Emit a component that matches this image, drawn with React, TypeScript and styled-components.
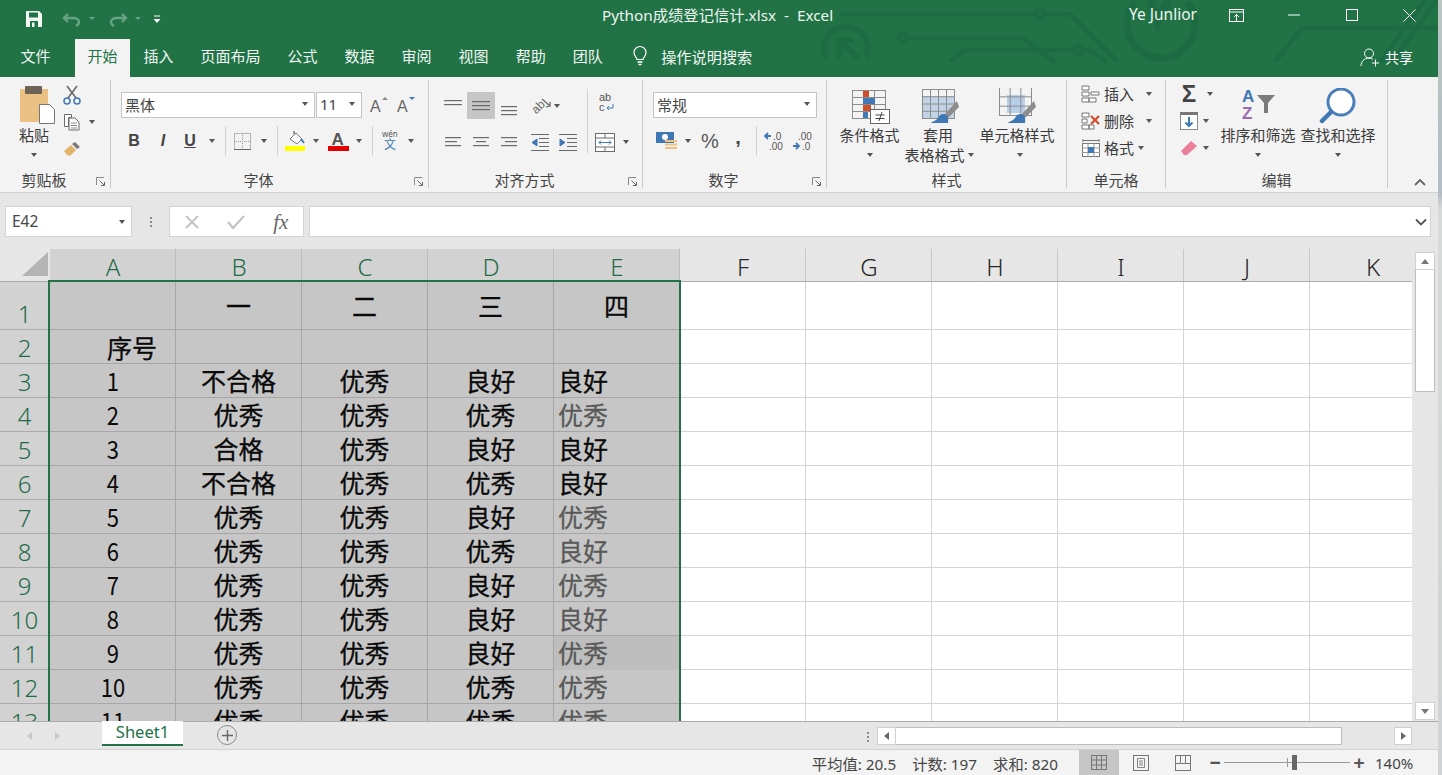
import React, {FC} from 'react';
import styled, {createGlobalStyle} from 'styled-components';

const GREEN = '#217346';
const CJK = '"Noto Sans", "Noto Sans CJK SC", sans-serif';

const Global = createGlobalStyle`
html, body {
  margin: 0;
  width: 1442px;
  height: 775px;
  overflow: hidden;
  background: #e6e6e6;
  font-family: ${CJK};
  color: #333;
}
`;

const Page = styled.div`
display: flex;
width: 1442px;
height: 775px;
overflow: hidden;
`;
const Edge = styled.div`
width: 4px;
background: linear-gradient(#b9c6c2, #b4bcc4 25%, #d6dad8 27%, #cfd3d3);
`;
const Win = styled.div`
width: 1438px;
display: flex;
flex-direction: column;
`;

/* ---- header ---- */
const Header = styled.header`
position: relative;
height: 77px;
background: ${GREEN};
color: #fff;
`;
const Circuit = styled.svg`
position: absolute;
left: 0;
top: 0;
pointer-events: none;
`;
const TitleRow = styled.div`
position: relative;
display: flex;
align-items: center;
height: 37px;
`;
const Quick = styled.div`
width: 602px;
display: flex;
align-items: center;
padding-left: 25px;
box-sizing: border-box;
`;
const QuickSlot = styled.div<{$w: number; $ml?: number}>`
width: ${p => p.$w}px;
margin-left: ${p => p.$ml || 0}px;
display: flex;
align-items: center;
gap: 7px;
`;
const DocTitle = styled.div`
width: 527px;
font-size: 15.3px;
white-space: pre;
color: #eef5f0;
margin-top: -9px;
`;
const UserName = styled.div`
width: 79px;
font-size: 15.5px;
margin-top: -9px;
color: #eef5f0;
white-space: nowrap;
`;
const WinBtn = styled.div`
width: 57.5px;
display: flex;
justify-content: center;
margin-top: -7px;
`;
const TabRow = styled.nav`
position: relative;
display: flex;
align-items: center;
height: 40px;
padding-left: 7px;
`;
const Tab = styled.div<{$active?: boolean; $gap?: number}>`
display: flex;
align-items: center;
align-self: flex-end;
height: 38px;
box-sizing: border-box;
padding: 0 ${p => (p.$active ? 12.5 : 13.5)}px 5px;
margin-right: ${p => p.$gap || 0}px;
font-size: 15px;
color: ${p => (p.$active ? '#217346' : '#f2f7f4')};
background: ${p => (p.$active ? '#f3f3f3' : 'transparent')};
`;
const TellMe = styled.div`
display: flex;
align-items: center;
gap: 11px;
margin-left: 14px;
font-size: 15.2px;
color: #f2f7f4;
padding-bottom: 3px;
`;
const Share = styled.div`
margin-left: auto;
padding-right: 25px;
display: flex;
align-items: center;
gap: 4px;
font-size: 14px;
`;

/* ---- ribbon ---- */
const Ribbon = styled.section`
display: flex;
height: 116px;
background: #f3f3f3;
border-bottom: 1px solid #d2d2d2;
box-sizing: border-box;
font-size: 15px;
color: #3a3a3a;
`;
const Group = styled.div<{$w: number}>`
position: relative;
width: ${p => p.$w}px;
display: flex;
flex-direction: column;
box-sizing: border-box;
&::after {
  content: "";
  position: absolute;
  right: 0;
  top: 3px;
  bottom: 4px;
  width: 1px;
  background: #c8c8c8;
}
`;
const Body = styled.div<{$pt?: number; $pl?: number}>`
height: 92px;
box-sizing: border-box;
padding-top: ${p => p.$pt ?? 15}px;
padding-left: ${p => p.$pl ?? 10}px;
display: flex;
`;
const Foot = styled.div`
height: 20px;
display: flex;
align-items: center;
padding-right: 1px;
`;
const FootLabel = styled.div`
flex: 1;
text-align: center;
font-size: 15px;
color: #444;
`;
const FootLauncher = styled.div`
width: 22px;
box-sizing: border-box;
padding: 5px 4px 0 0;
display: flex;
justify-content: flex-end;
`;
const Stack = styled.div<{$gap?: number}>`
display: flex;
flex-direction: column;
gap: ${p => p.$gap ?? 11}px;
`;
const Row = styled.div<{$h?: number}>`
display: flex;
align-items: center;
height: ${p => p.$h ?? 26}px;
`;
const Slot = styled.div<{$w: number; $on?: boolean}>`
width: ${p => p.$w}px;
height: 100%;
flex: none;
display: flex;
align-items: center;
justify-content: center;
background: ${p => (p.$on ? '#c6c6c6' : 'transparent')};
`;
const Caret = styled.i`
display: block;
width: 0;
height: 0;
border-left: 3.5px solid transparent;
border-right: 3.5px solid transparent;
border-top: 4px solid #555;
`;
const QuickCaret = styled(Caret)`
border-left-width: 3px;
border-right-width: 3px;
border-top: 3px solid #67a384;
`;
const Bar = styled.i`
display: block;
width: 1px;
height: 30px;
background: #d2d2d2;
`;
const Select = styled.div<{$w: number}>`
width: ${p => p.$w}px;
height: 26px;
flex: none;
box-sizing: border-box;
display: flex;
align-items: center;
justify-content: space-between;
padding: 0 6px 2px 3px;
background: #fff;
border: 1px solid #c4c4c4;
font-size: 15px;
color: #444;
`;
const FontLetter = styled.span<{$i?: boolean; $u?: boolean}>`
font-family: "Liberation Sans", sans-serif;
font-weight: 700;
font-size: 16px;
color: #444;
font-style: ${p => (p.$i ? 'italic' : 'normal')};
text-decoration: ${p => (p.$u ? 'underline' : 'none')};
`;
const NumText = styled.span<{$size: number}>`
font-family: "Liberation Sans", sans-serif;
font-size: ${p => p.$size}px;
font-weight: 400;
color: #555;
`;
const Big = styled.div<{$w: number}>`
width: ${p => p.$w}px;
flex: none;
display: flex;
flex-direction: column;
align-items: center;
`;
const BigIcon = styled.div<{$h?: number; $ml?: number}>`
height: ${p => p.$h ?? 37}px;
margin-left: ${p => p.$ml || 0}px;
display: flex;
align-items: flex-start;
justify-content: center;
`;
const BigLine = styled.div<{$ml?: number}>`
height: 20px;
line-height: 20px;
margin-left: ${p => p.$ml || 0}px;
display: flex;
align-items: center;
gap: 3px;
white-space: nowrap;
font-size: 15px;
color: #3a3a3a;
`;
const MiniRow = styled.div<{$caret: number}>`
display: flex;
align-items: center;
height: 27px;
font-size: 15px;
gap: 1px;
& > i {
  margin-left: ${p => p.$caret}px;
}
`;
const Collapse = styled.div`
flex: 1;
display: flex;
align-items: flex-end;
justify-content: flex-end;
padding: 0 12px 6px 0;
`;

/* ---- formula bar ---- */
const FormulaBar = styled.div`
height: 56px;
box-sizing: border-box;
padding: 13px 7px 12px 5px;
display: flex;
background: #e6e6e6;
font-size: 15.5px;
`;
const WhiteBox = styled.div<{$w?: number}>`
${p => (p.$w ? `width: ${p.$w}px; flex: none;` : 'flex: 1;')}
box-sizing: border-box;
background: #fff;
border: 1px solid #d4d4d4;
display: flex;
align-items: center;
`;
const NameValue = styled.span`
flex: 1;
padding: 0 0 2px 6px;
color: #444;
`;
const Grip = styled.div`
width: 37px;
display: flex;
flex-direction: column;
align-items: center;
justify-content: center;
gap: 2px;
& i {
  width: 2px;
  height: 2px;
  background: #8a8a8a;
}
`;
const FxBtn = styled.div`
flex: 1;
display: flex;
align-items: center;
justify-content: center;
`;
const FxText = styled.span`
font-family: "Liberation Serif", serif;
font-style: italic;
font-weight: 400;
font-size: 21px;
color: #666;
line-height: 20px;
`;

/* ---- sheet ---- */
const SheetArea = styled.div`
height: 472px;
display: flex;
background: #e6e6e6;
`;
const Grid = styled.div`
position: relative;
width: 1412px;
height: 472px;
overflow: hidden;
background: #fff;
`;
const GridRow = styled.div`
display: flex;
`;
const Corner = styled.div`
width: 50px;
height: 32px;
flex: none;
box-sizing: content-box;
display: flex;
align-items: flex-end;
justify-content: flex-end;
background: #e6e6e6;
border-bottom: 1px solid #ababab;
& > svg {
  margin: 0 2px 5px 0;
}
`;
const ColHead = styled.div<{$sel: boolean}>`
width: 126px;
height: 32px;
flex: none;
box-sizing: content-box;
display: flex;
align-items: center;
justify-content: center;
font-size: 24px;
font-weight: 300;
line-height: 30px;
padding-top: 0;
background: ${p => (p.$sel ? '#d2d2d2' : '#e6e6e6')};
color: ${p => (p.$sel ? '#1f6b48' : '#262626')};
border-bottom: 1px solid #ababab;
box-shadow: inset -1px 0 0 ${p => (p.$sel ? '#bdbdbd' : '#c8c8c8')};
& > span {
  transform: translateY(2px);
}
`;
const RowHead = styled.div<{$h: number}>`
width: 50px;
height: ${p => p.$h}px;
flex: none;
box-sizing: border-box;
display: flex;
align-items: flex-end;
justify-content: center;
padding-right: 1px;
line-height: 31px;
font-size: 24px;
font-weight: 300;
color: #1f6b48;
background: #d2d2d2;
border-bottom: 1px solid #ababab;
`;
const Cell = styled.div<{$h: number; $sel: boolean; $align: string; $gray?: boolean; $dark?: boolean; $pl: number}>`
width: 126px;
height: ${p => p.$h}px;
flex: none;
box-sizing: border-box;
display: flex;
align-items: center;
justify-content: ${p => p.$align};
padding-left: ${p => p.$pl}px;
font-family: "Noto Sans CJK SC", sans-serif;
font-size: 25px;
font-weight: 400;
-webkit-text-stroke: 0.3px currentColor;
line-height: 1;
color: ${p => (p.$gray ? '#595959' : '#0a0a0a')};
background: ${p => (p.$dark ? '#bebebe' : p.$sel ? '#c6c6c6' : '#fff')};
border-right: 1px solid ${p => (p.$sel ? '#a6a6a6' : '#d4d4d4')};
border-bottom: 1px solid ${p => (p.$dark ? '#bebebe' : p.$sel ? '#a6a6a6' : '#d4d4d4')};
`;
const Digit = styled.span`
display: inline-block;
font-weight: 400;
-webkit-text-stroke: 0;
transform: scaleX(0.88);
`;
const SeqHead = styled.span`
padding-bottom: 1px;
padding-top: 2px;
`;
const Selection = styled.div`
position: absolute;
left: 48px;
top: 31px;
width: 629px;
height: 460px;
border: 2px solid ${GREEN};
`;
const VScroll = styled.div`
width: 26px;
box-sizing: border-box;
padding: 3px 3px 1px 3px;
display: flex;
flex-direction: column;
`;
const ScrollBtn = styled.div<{$w?: number}>`
width: ${p => p.$w ?? 20}px;
height: 18px;
flex: none;
box-sizing: border-box;
background: #fff;
border: 1px solid #d0d0d0;
display: flex;
align-items: center;
justify-content: center;
`;
const VThumb = styled.div`
width: 20px;
height: 122px;
box-sizing: border-box;
background: #fff;
border: 1px solid #bdbdbd;
border-top: none;
margin-bottom: auto;
`;
const Arrow = styled.i<{$dir: 'up' | 'down' | 'left' | 'right'; $color?: string}>`
display: block;
width: 0;
height: 0;
border: 4.5px solid transparent;
${p => (p.$dir === 'up' ? `border-top: none; border-bottom: 5px solid ${p.$color || '#777'};` : '')}
${p => (p.$dir === 'down' ? `border-bottom: none; border-top: 5px solid ${p.$color || '#777'};` : '')}
${p => (p.$dir === 'left' ? `border-left: none; border-right: 5px solid ${p.$color || '#777'};` : '')}
${p => (p.$dir === 'right' ? `border-right: none; border-left: 5px solid ${p.$color || '#777'};` : '')}
`;

/* ---- sheet tabs ---- */
const TabBar = styled.div`
height: 29px;
box-sizing: border-box;
display: flex;
background: #e6e6e6;
border-top: 1px solid #ababab;
border-bottom: 1px solid #d2d2d2;
`;
const NavArrows = styled.div`
width: 102px;
display: flex;
align-items: center;
gap: 23px;
padding-left: 27px;
box-sizing: border-box;
`;
const SheetTab = styled.div`
width: 81px;
height: 25px;
box-sizing: border-box;
margin-top: -1px;
background: #fff;
border-bottom: 2px solid ${GREEN};
color: ${GREEN};
font-size: 16.5px;
text-align: center;
line-height: 22px;
`;
const AddSheet = styled.div`
width: 20px;
height: 20px;
box-sizing: border-box;
margin: 3px 0 0 34px;
border: 1px solid #8a8a8a;
border-radius: 50%;
display: flex;
align-items: center;
justify-content: center;
`;
const HGrip = styled(Grip)`
width: auto;
margin-left: auto;
margin-right: 8px;
padding-top: 2px;
`;
const HScroll = styled.div`
width: 535px;
margin: 5px 26px 0 0;
height: 18px;
display: flex;
`;
const HThumb = styled.div`
width: 446px;
height: 18px;
box-sizing: border-box;
background: #fff;
border: 1px solid #bdbdbd;
border-left: none;
margin-right: auto;
`;

/* ---- status bar ---- */
const StatusBar = styled.footer`
height: 25px;
display: flex;
align-items: center;
background: #f3f3f3;
font-size: 15.3px;
color: #444;
`;
const Stats = styled.div`
margin-left: auto;
display: flex;
gap: 16px;
`;
const ViewBtns = styled.div`
display: flex;
gap: 2px;
margin-left: 21px;
height: 100%;
`;
const ViewBtn = styled.div<{$on?: boolean}>`
width: 40px;
display: flex;
align-items: center;
justify-content: center;
background: ${p => (p.$on ? '#c6c6c6' : 'transparent')};
`;
const Zoomer = styled.div`
display: flex;
align-items: center;
margin-left: 5px;
gap: 2px;
color: #555;
`;
const ZoomSign = styled.span`
width: 14px;
text-align: center;
font-size: 19px;
line-height: 19px;
font-family: "Liberation Sans", sans-serif;
font-weight: 700;
`;
const ZoomTrack = styled.div`
position: relative;
width: 126px;
height: 1px;
background: #9a9a9a;
&::before {
  content: "";
  position: absolute;
  left: 63px;
  top: -4px;
  width: 1px;
  height: 9px;
  background: #9a9a9a;
}
`;
const ZoomThumb = styled.div`
position: absolute;
left: 68px;
top: -7px;
width: 5px;
height: 15px;
background: #666;
`;
const ZoomValue = styled.div`
width: 72px;
padding-left: 9px;
box-sizing: border-box;
font-size: 15px;
`;

/* ---- icons ---- */
const S: FC<{w: number; h: number; children: React.ReactNode}> = ({w, h, children}) => (
    <svg width={w} height={h} viewBox={`0 0 ${w} ${h}`} style={{display: 'block', flex: 'none'}}>{children}</svg>
);

const Lines: FC<{rows: number[][]; w?: number; h?: number}> = ({rows, w = 22, h = 20}) => (
    <S w={w} h={h}>
        {rows.map((r, i) => <rect key={i} x={r[1]} y={r[0]} width={r[2] - r[1]} height={1.2} fill="#6a6a6a" />)}
    </S>
);

const Brush: FC<{x: number; y: number}> = ({x, y}) => (
    <g transform={`translate(${x} ${y})`}>
        <path d="M26 0l2 6-11 11-4-3z" fill="#8d8d8d" />
        <path d="M12 13c4 0 6 3 5 9H0c2-2 5-2 7-5 1-2 3-4 5-4z" fill="#3f78b5" />
    </g>
);

const TableGrid: FC<{w: number; h: number; cols: number; rows: number}> = ({w, h, cols, rows}) => (
    <g stroke="#8c8c8c" strokeWidth="1" fill="none">
        <rect x=".5" y=".5" width={w} height={h} />
        {Array.from({length: cols - 1}).map((_, i) => <path key={i} d={`M${.5 + (i + 1) * w / cols} 0v${h}`} />)}
        {Array.from({length: rows - 1}).map((_, i) => <path key={i} d={`M0 ${.5 + (i + 1) * h / rows}h${w}`} />)}
    </g>
);

const Launcher: FC = () => (
    <S w={10} h={10}>
        <path d="M.5 8V.5H8" fill="none" stroke="#8a8a8a" />
        <path d="M3.5 3.5L8 8M8.5 5v3.5H5" fill="none" stroke="#666" />
    </S>
);

const SmallGroupLabel: FC<{label: string; launcher?: boolean}> = ({label, launcher}) => (
    <Foot>
        <FootLabel>{label}</FootLabel>
        {launcher && <FootLauncher><Launcher /></FootLauncher>}
    </Foot>
);

const columns = ['A', 'B', 'C', 'D', 'E', 'F', 'G', 'H', 'I', 'J', 'K'];

interface RowData {
    no: number;
    h: number;
    a?: string;
    cells: string[];
    grayE?: boolean;
}

const rows: RowData[] = [
    {no: 1, h: 48, cells: ['一', '二', '三', '四']},
    {no: 2, h: 34, a: '序号', cells: ['', '', '', '']},
    {no: 3, h: 34, a: '1', cells: ['不合格', '优秀', '良好', '良好']},
    {no: 4, h: 34, a: '2', cells: ['优秀', '优秀', '优秀', '优秀'], grayE: true},
    {no: 5, h: 34, a: '3', cells: ['合格', '优秀', '良好', '良好']},
    {no: 6, h: 34, a: '4', cells: ['不合格', '优秀', '优秀', '良好']},
    {no: 7, h: 34, a: '5', cells: ['优秀', '优秀', '良好', '优秀'], grayE: true},
    {no: 8, h: 34, a: '6', cells: ['优秀', '优秀', '优秀', '良好'], grayE: true},
    {no: 9, h: 34, a: '7', cells: ['优秀', '优秀', '良好', '优秀'], grayE: true},
    {no: 10, h: 34, a: '8', cells: ['优秀', '优秀', '良好', '良好'], grayE: true},
    {no: 11, h: 34, a: '9', cells: ['优秀', '优秀', '良好', '优秀'], grayE: true},
    {no: 12, h: 34, a: '10', cells: ['优秀', '优秀', '优秀', '优秀'], grayE: true},
    {no: 13, h: 34, a: '11', cells: ['优秀', '优秀', '优秀', '优秀'], grayE: true},
];

const SheetRow: FC<{row: RowData}> = ({row}) => (
    <GridRow>
        <RowHead $h={row.h}>{row.no}</RowHead>
        <Cell $h={row.h} $sel $align={row.a === '序号' ? 'flex-start' : 'center'} $pl={row.a === '序号' ? 57 : 0}>
            {row.a === '序号' ? <SeqHead>{row.a}</SeqHead> : <Digit>{row.a}</Digit>}
        </Cell>
        {row.cells.map((c, i) => (
            <Cell key={i} $h={row.h} $sel
                $align={i === 3 && row.no > 1 ? 'flex-start' : 'center'}
                $pl={i === 3 && row.no > 1 ? 4 : 0}
                $gray={i === 3 && row.grayE}
                $dark={i === 3 && row.no === 11}>
                {c}
            </Cell>
        ))}
        {columns.slice(5).map(c => <Cell key={c} $h={row.h} $sel={false} $align="center" $pl={0} />)}
    </GridRow>
);

export default function App() {
    return (
        <Page>
            <Global />
            <Win>
                <Header>
                    <Circuit width={1438} height={77} viewBox="0 0 1438 77">
                        <g fill="none" stroke="#1d6b42" strokeWidth="4.5">
                            <path d="M841 14H1036M1044 14H1070L1118 62" />
                            <circle cx="1040" cy="14" r="4" />
                            <circle cx="903" cy="38" r="4" />
                            <path d="M907 38H1023L1055 62" />
                            <path d="M950 62L964 50H1074M1082 50H1090L1106 62" />
                            <circle cx="1078" cy="50" r="4" />
                            <path d="M826 58A22 22 0 1 1 866 58" strokeWidth="6" />
                            <path d="M839 58V40H854M839 40L858 58" strokeWidth="5" />
                            <path d="M1135 -2A34 34 0 1 0 1187 -2" strokeWidth="7" transform="translate(0 4)" />
                            <path d="M1150 0L1158 22L1168 0" strokeWidth="8" />
                            <path d="M1275 62L1302 28H1438M1380 62L1425 0M1392 62L1437 0" />
                        </g>
                    </Circuit>
                    <TitleRow>
                        <Quick>
                            <QuickSlot $w={20}>
                                <S w={18} h={18}>
                                    <path d="M1 1h13l3 3v13H1z" fill="#f4f9f6" />
                                    <rect x="4" y="2.5" width="9" height="5" fill="#217346" />
                                    <rect x="5" y="11" width="8" height="6" fill="#217346" />
                                    <rect x="7" y="12.5" width="2.5" height="4.5" fill="#f4f9f6" />
                                </S>
                            </QuickSlot>
                            <QuickSlot $w={44} $ml={17}>
                                <S w={20} h={16}>
                                    <path d="M6 3L2 7l4 4M2 7h9c4 0 6 2 6 4s-1 3-3 4" fill="none" stroke="#67a384" strokeWidth="2.4" />
                                </S>
                                <QuickCaret />
                            </QuickSlot>
                            <QuickSlot $w={44} $ml={2}>
                                <S w={20} h={16}>
                                    <path d="M14 3l4 4-4 4M18 7H9c-4 0-6 2-6 4s1 3 3 4" fill="none" stroke="#67a384" strokeWidth="2.4" />
                                </S>
                                <QuickCaret />
                            </QuickSlot>
                            <QuickSlot $w={16}>
                                <S w={10} h={10}>
                                    <path d="M2 2h6" stroke="#fff" strokeWidth="1" />
                                    <path d="M1.5 5h7L5 9z" fill="#fff" />
                                </S>
                            </QuickSlot>
                        </Quick>
                        <DocTitle>Python成绩登记信计.xlsx  -  Excel</DocTitle>
                        <UserName>Ye Junlior</UserName>
                        <WinBtn>
                            <S w={15} h={13}>
                                <rect x=".5" y=".5" width="14" height="12" fill="none" stroke="#fff" />
                                <path d="M0 3h15" stroke="#fff" />
                                <path d="M7.5 12V5.5M5 8l2.5-2.5L10 8" fill="none" stroke="#fff" />
                            </S>
                        </WinBtn>
                        <WinBtn><S w={12} h={2}><path d="M0 1h12" stroke="#fff" /></S></WinBtn>
                        <WinBtn><S w={12} h={12}><rect x=".5" y=".5" width="11" height="11" fill="none" stroke="#fff" /></S></WinBtn>
                        <WinBtn><S w={13} h={13}><path d="M.5.5l12 12M12.5.5l-12 12" stroke="#fff" /></S></WinBtn>
                    </TitleRow>
                    <TabRow>
                        <Tab $gap={11}>文件</Tab>
                        <Tab $active>开始</Tab>
                        <Tab>插入</Tab>
                        <Tab>页面布局</Tab>
                        <Tab>公式</Tab>
                        <Tab>数据</Tab>
                        <Tab>审阅</Tab>
                        <Tab>视图</Tab>
                        <Tab>帮助</Tab>
                        <Tab>团队</Tab>
                        <TellMe>
                            <S w={20} h={21}>
                                <path d="M7 14.5c0-2-3-3.5-3-7a6 6 0 0 1 12 0c0 3.500-3 5-3 7z" fill="none" stroke="#fff" strokeWidth="1.2" />
                                <path d="M7.500 17h5M8.500 19.500h3" stroke="#fff" strokeWidth="1.4" />
                            </S>
                            操作说明搜索
                        </TellMe>
                        <Share>
                            <S w={21} h={20}>
                                <circle cx="9" cy="6.500" r="4.500" fill="none" stroke="#fff" />
                                <path d="M1 19c0-4 3-8 8-8 1.500 0 3 .5 4 1.500" fill="none" stroke="#fff" />
                                <path d="M15.500 12.500v7M12 16h7" stroke="#fff" />
                            </S>
                            共享
                        </Share>
                    </TabRow>
                </Header>

                <Ribbon>
                    <Group $w={111}>
                        <Body $pt={8} $pl={12}>
                            <Big $w={44}>
                                <BigIcon $h={40} $ml={6}>
                                    <S w={36} h={40}>
                                        <rect x="1" y="4" width="28" height="33" fill="#eac083" />
                                        <rect x="6" y="1" width="17" height="8" rx="1" fill="#6f6257" />
                                        <path d="M20.500 19.500h10l5 5v14h-15z" fill="#fff" stroke="#777" />
                                    </S>
                                </BigIcon>
                                <BigLine>粘贴</BigLine>
                                <BigLine><Caret /></BigLine>
                            </Big>
                            <Stack $gap={0} style={{marginLeft: 4, marginTop: -4}}>
                                <Row $h={27}>
                                    <Slot $w={24}>
                                        <S w={18} h={20}>
                                            <path d="M4 1l9 12M14 1L5 13" stroke="#6a6a6a" strokeWidth="1.600" />
                                            <circle cx="4" cy="16" r="3" fill="none" stroke="#3f78b5" strokeWidth="1.500" />
                                            <circle cx="14" cy="16" r="3" fill="none" stroke="#3f78b5" strokeWidth="1.500" />
                                        </S>
                                    </Slot>
                                </Row>
                                <Row $h={27}>
                                    <Slot $w={24}>
                                        <S w={18} h={18}>
                                            <path d="M1.500 1.500h7v3h-3v9h-4zM6 5h6l4 4v8H6z" fill="#fff" stroke="#6a6a6a" />
                                            <path d="M8 10h6M8 12.500h6M8 15h6" stroke="#888" />
                                        </S>
                                    </Slot>
                                    <Slot $w={16}><Caret /></Slot>
                                </Row>
                                <Row $h={27}>
                                    <Slot $w={24}>
                                        <S w={18} h={14}>
                                            <path d="M1 9l7-6 5 5-6 6-3-1z" fill="#e2b468" />
                                            <path d="M9 2l3-2 5 5-3 2z" fill="#7a7a7a" />
                                        </S>
                                    </Slot>
                                </Row>
                            </Stack>
                        </Body>
                        <SmallGroupLabel label="剪贴板" launcher />
                    </Group>

                    <Group $w={318}>
                        <Body>
                            <Stack>
                                <Row>
                                    <Select $w={194}>黑体<Caret /></Select>
                                    <Select $w={46} style={{marginLeft: 1}}>11<Caret /></Select>
                                    <Slot $w={3} />
                                    <Slot $w={27}>
                                        <svg width="20" height="18" viewBox="0 0 20 18">
                                            <text x="1" y="16" fontFamily="Liberation Sans" fontSize="16" fill="#666">A</text>
                                            <path d="M13 4h6l-3-3z" fill="#8a8a8a" />
                                        </svg>
                                    </Slot>
                                    <Slot $w={27}>
                                        <svg width="20" height="18" viewBox="0 0 20 18">
                                            <text x="1" y="16" fontFamily="Liberation Sans" fontSize="16" fill="#666">A</text>
                                            <path d="M13 1h6l-3 3z" fill="#3f78b5" />
                                        </svg>
                                    </Slot>
                                </Row>
                                <Row style={{marginLeft: -1, marginTop: -1}}>
                                    <Slot $w={28}><FontLetter>B</FontLetter></Slot>
                                    <Slot $w={30}><FontLetter $i>I</FontLetter></Slot>
                                    <Slot $w={24}><FontLetter $u>U</FontLetter></Slot>
                                    <Slot $w={20}><Caret /></Slot>
                                    <Slot $w={6}><Bar /></Slot>
                                    <Slot $w={28}>
                                        <S w={17} h={17}>
                                            <rect x=".5" y=".5" width="16" height="16" fill="none" stroke="#777" strokeDasharray="1 1" />
                                            <path d="M8.500 0v17M0 8.500h17" stroke="#999" strokeDasharray="1 1" />
                                            <path d="M0 16.500h17" stroke="#666" />
                                        </S>
                                    </Slot>
                                    <Slot $w={16}><Caret /></Slot>
                                    <Slot $w={10}><Bar /></Slot>
                                    <Slot $w={26}>
                                        <S w={21} h={22}>
                                            <rect x="0" y="16" width="20" height="5" fill="#ffff00" />
                                            <path d="M5 9l6-6 6 6-5 5z" fill="#fff" stroke="#777" />
                                            <path d="M9 4V1" stroke="#777" strokeWidth="1.500" />
                                            <path d="M16 9l3 4" stroke="#3f78b5" strokeWidth="2" />
                                        </S>
                                    </Slot>
                                    <Slot $w={16}><Caret /></Slot>
                                    <Slot $w={28}>
                                        <svg width="21" height="22" viewBox="0 0 21 22">
                                            <text x="3.500" y="15" fontFamily="Liberation Sans" fontWeight="700" fontSize="17" fill="#555">A</text>
                                            <rect x="0" y="16" width="21" height="5" fill="#e00000" />
                                        </svg>
                                    </Slot>
                                    <Slot $w={14}><Caret /></Slot>
                                    <Slot $w={12}><Bar /></Slot>
                                    <Slot $w={24}>
                                        <svg width="22" height="24" viewBox="0 0 22 24">
                                            <text x="3" y="8" fontFamily="Noto Sans" fontSize="8" fill="#555">wén</text>
                                            <text x="5" y="20" fontFamily="Noto Sans CJK SC" fontSize="12" fill="#3f78b5">文</text>
                                        </svg>
                                    </Slot>
                                    <Slot $w={18}><Caret /></Slot>
                                </Row>
                            </Stack>
                        </Body>
                        <SmallGroupLabel label="字体" launcher />
                    </Group>

                    <Group $w={214}>
                        <Body>
                            <Stack>
                                <Row style={{height: 27}}>
                                    <Slot $w={28}><Lines w={20} h={22} rows={[[5, 1, 19], [9, 1, 19]]} /></Slot>
                                    <Slot $w={28} $on><Lines w={20} h={22} rows={[[6, 1, 19], [10, 1, 19], [14, 1, 19]]} /></Slot>
                                    <Slot $w={28}><Lines w={20} h={22} rows={[[11, 2, 18], [15, 2, 18], [19, 2, 18]]} /></Slot>
                                    <Slot $w={6} />
                                    <Slot $w={24}>
                                        <svg width="24" height="24" viewBox="0 0 24 24" overflow="visible">
                                            <text x="2" y="16" fontFamily="Liberation Sans" fontSize="12" fill="#666" transform="rotate(-45 10 12)">ab</text>
                                            <path d="M13 5l8 7-4 1M21 12l0-4" fill="none" stroke="#666" strokeWidth="1.200" />
                                        </svg>
                                    </Slot>
                                    <Slot $w={8}><Caret /></Slot>
                                </Row>
                                <Row style={{marginTop: -1}}>
                                    <Slot $w={28}><Lines w={20} h={14} rows={[[2, 2, 18], [6, 2, 14], [10, 2, 18]]} /></Slot>
                                    <Slot $w={28}><Lines w={20} h={14} rows={[[2, 2, 18], [6, 5, 15], [10, 2, 18]]} /></Slot>
                                    <Slot $w={28}><Lines w={20} h={14} rows={[[2, 2, 18], [6, 6, 18], [10, 2, 18]]} /></Slot>
                                    <Slot $w={3} />
                                    <Slot $w={28}>
                                        <S w={20} h={17}>
                                            <path d="M1 .5h18M9 4.500h10M9 8.500h10M9 12.500h10M1 16.500h18" stroke="#6a6a6a" />
                                            <path d="M7 5L2 8.500 7 12zM6 8h-2" fill="#3f78b5" stroke="#3f78b5" />
                                        </S>
                                    </Slot>
                                    <Slot $w={28}>
                                        <S w={20} h={17}>
                                            <path d="M1 .5h18M9 4.500h10M9 8.500h10M9 12.500h10M1 16.500h18" stroke="#6a6a6a" />
                                            <path d="M2 5l5 3.500L2 12z" fill="#3f78b5" stroke="#3f78b5" />
                                        </S>
                                    </Slot>
                                </Row>
                            </Stack>
                            <Slot $w={10} style={{height: 62, marginTop: -2}}><Bar style={{height: 64}} /></Slot>
                            <Stack style={{marginTop: -3}}>
                                <Row style={{height: 27}}>
                                    <Slot $w={28}>
                                        <svg width="20" height="24" viewBox="0 0 20 24">
                                            <text x="3" y="10" fontFamily="Liberation Sans" fontSize="11" fill="#555">ab</text>
                                            <text x="3" y="20" fontFamily="Liberation Sans" fontSize="11" fill="#555">c</text>
                                            <path d="M17 13v4h-6M13 15l-2 2 2 2" fill="none" stroke="#3f78b5" />
                                        </svg>
                                    </Slot>
                                </Row>
                                <Row style={{marginTop: 2}}>
                                    <Slot $w={25}>
                                        <S w={20} h={19}>
                                            <rect x=".5" y=".5" width="19" height="18" fill="#fff" stroke="#6a6a6a" />
                                            <path d="M0 5h20M0 14h20M10 0v5M10 14v5" stroke="#6a6a6a" />
                                            <path d="M4 9.500h12M6 7.500l-2 2 2 2M14 7.500l2 2-2 2" fill="none" stroke="#3f78b5" />
                                        </S>
                                    </Slot>
                                    <Slot $w={18}><Caret /></Slot>
                                </Row>
                            </Stack>
                        </Body>
                        <SmallGroupLabel label="对齐方式" launcher />
                    </Group>

                    <Group $w={184}>
                        <Body>
                            <Stack>
                                <Row><Select $w={164}>常规<Caret /></Select></Row>
                                <Row style={{marginLeft: 2, marginTop: -1}}>
                                    <Slot $w={24}>
                                        <S w={22} h={20}>
                                            <rect x="0" y="1" width="18" height="11" fill="#3f78b5" />
                                            <circle cx="9" cy="6" r="3" fill="#fff" />
                                            <path d="M9 9h12v2H9zM9 12.500h12v2H9zM9 16h12v2H9z" fill="#eec17e" />
                                        </S>
                                    </Slot>
                                    <Slot $w={18}><Caret /></Slot>
                                    <Slot $w={26}><NumText $size={20}>%</NumText></Slot>
                                    <Slot $w={30}><FontLetter style={{fontSize: 20, marginTop: -8}}>,</FontLetter></Slot>
                                    <Slot $w={6}><Bar /></Slot>
                                    <Slot $w={2} />
                                    <Slot $w={28}>
                                        <svg width="24" height="22" viewBox="0 0 24 22">
                                            <path d="M8 6H2M5 3L2 6l3 3" fill="none" stroke="#3f78b5" strokeWidth="1.800" />
                                            <text x="10" y="10" fontFamily="Liberation Sans" fontSize="10" fill="#555">.0</text>
                                            <text x="6" y="20" fontFamily="Liberation Sans" fontSize="10" fill="#555">.00</text>
                                        </svg>
                                    </Slot>
                                    <Slot $w={28}>
                                        <svg width="24" height="22" viewBox="0 0 24 22">
                                            <text x="7" y="10" fontFamily="Liberation Sans" fontSize="10" fill="#555">.00</text>
                                            <path d="M2 16h6M5 13l3 3-3 3" fill="none" stroke="#3f78b5" strokeWidth="1.800" />
                                            <text x="11" y="20" fontFamily="Liberation Sans" fontSize="10" fill="#555">.0</text>
                                        </svg>
                                    </Slot>
                                </Row>
                            </Stack>
                        </Body>
                        <SmallGroupLabel label="数字" launcher />
                    </Group>

                    <Group $w={240}>
                        <Body $pt={11} $pl={8}>
                            <Big $w={69}>
                                <BigIcon $ml={5}>
                                    <S w={40} h={37}>
                                        <g transform="translate(0 2)">
                                            <TableGrid w={33} h={28} cols={3} rows={4} />
                                            <rect x="11" y="1" width="6" height="6" fill="#d24e2b" />
                                            <rect x="11" y="8" width="12" height="6" fill="#3f78b5" />
                                            <rect x="11" y="15" width="8" height="6" fill="#d24e2b" />
                                            <rect x="11" y="22" width="5" height="6" fill="#3f78b5" />
                                            <rect x="18.500" y="19.500" width="19" height="14" fill="#fff" stroke="#666" />
                                            <path d="M23.500 25h9M23.500 28.500h9M30 22l-3 9" stroke="#444" fill="none" />
                                        </g>
                                    </S>
                                </BigIcon>
                                <BigLine>条件格式</BigLine>
                                <BigLine><Caret /></BigLine>
                            </Big>
                            <Big $w={68}>
                                <BigIcon $ml={8}>
                                    <S w={40} h={37}>
                                        <g transform="translate(0 1)">
                                            <rect x="0" y="7" width="32" height="22" fill="#c3d3e6" />
                                            <TableGrid w={32} h={29} cols={4} rows={4} />
                                            <Brush x={9} y={12} />
                                        </g>
                                    </S>
                                </BigIcon>
                                <BigLine>套用</BigLine>
                                <BigLine $ml={2}>表格格式<Caret /></BigLine>
                            </Big>
                            <Big $w={90}>
                                <BigIcon $ml={4}>
                                    <S w={40} h={37}>
                                        <g transform="translate(0 -1)">
                                            <rect x="8" y="8" width="18" height="18" fill="#b8cfe8" />
                                            <TableGrid w={32} h={28} cols={3} rows={3} />
                                            <Brush x={9} y={14} />
                                        </g>
                                    </S>
                                </BigIcon>
                                <BigLine>单元格样式</BigLine>
                                <BigLine $ml={5}><Caret /></BigLine>
                            </Big>
                        </Body>
                        <SmallGroupLabel label="样式" />
                    </Group>

                    <Group $w={99}>
                        <Body $pt={3} $pl={12}>
                            <Stack $gap={0}>
                                <MiniRow $caret={11}>
                                    <Slot $w={24}>
                                        <S w={20} h={18}>
                                            <path d="M1 1h7v4H1zM1 7h7v4H1zM1 13h7v4H1zM8 13h7v4H8zM10 7h8v3h-8z" fill="#fff" stroke="#777" />
                                        </S>
                                    </Slot>
                                    插入<Caret />
                                </MiniRow>
                                <MiniRow $caret={11}>
                                    <Slot $w={24}>
                                        <S w={20} h={18}>
                                            <path d="M1 1h7v4H1zM1 7h5v4H1zM1 13h7v4H1zM8 13h5v4H8z" fill="#fff" stroke="#777" />
                                            <path d="M10 4l8 8M18 4l-8 8" stroke="#d24e2b" strokeWidth="2.200" />
                                        </S>
                                    </Slot>
                                    删除<Caret />
                                </MiniRow>
                                <MiniRow $caret={3}>
                                    <Slot $w={24}>
                                        <S w={20} h={20}>
                                            <path d="M2 1v3M18 1v3M2 2.500h16" stroke="#777" />
                                            <rect x="1.500" y="5.500" width="17" height="13" fill="#fff" stroke="#777" />
                                            <path d="M1 10h18M1 14.500h18M7 5v14M13 5v14" stroke="#999" />
                                            <rect x="7" y="9" width="6" height="6" fill="#3f78b5" />
                                        </S>
                                    </Slot>
                                    格式<Caret />
                                </MiniRow>
                            </Stack>
                        </Body>
                        <SmallGroupLabel label="单元格" />
                    </Group>

                    <Group $w={222}>
                        <Body $pt={3} $pl={12}>
                            <Stack $gap={0} style={{width: 40}}>
                                <Row $h={27}>
                                    <Slot $w={22}><NumText $size={24} style={{color: '#444', fontWeight: 700, lineHeight: '22px'}}>Σ</NumText></Slot>
                                    <Slot $w={20}><Caret /></Slot>
                                </Row>
                                <Row $h={27}>
                                    <Slot $w={22}>
                                        <S w={18} h={18}>
                                            <rect x=".5" y=".5" width="17" height="17" fill="#fff" stroke="#888" />
                                            <rect x="0" y="0" width="18" height="3" fill="#777" />
                                            <path d="M9 5v9M5.500 10.500L9 14l3.500-3.500" fill="none" stroke="#3f78b5" strokeWidth="2" />
                                        </S>
                                    </Slot>
                                    <Slot $w={12}><Caret /></Slot>
                                </Row>
                                <Row $h={27}>
                                    <Slot $w={22}>
                                        <S w={18} h={16}>
                                            <path d="M1 11L11 1l6 5L7 15H4z" fill="#ea7f99" />
                                        </S>
                                    </Slot>
                                    <Slot $w={12}><Caret /></Slot>
                                </Row>
                            </Stack>
                            <Body $pt={8} $pl={0} style={{height: 'auto'}}>
                                <Big $w={80}>
                                    <BigIcon>
                                        <svg width="36" height="37" viewBox="0 0 36 37">
                                            <text x="2" y="14" fontFamily="Liberation Sans" fontWeight="700" fontSize="17" fill="#3f78b5">A</text>
                                            <text x="2" y="31" fontFamily="Liberation Sans" fontWeight="700" fontSize="17" fill="#9a6bb5">Z</text>
                                            <path d="M17 7h18l-7 8v10h-4V15z" fill="#7a7a7a" />
                                        </svg>
                                    </BigIcon>
                                    <BigLine>排序和筛选</BigLine>
                                    <BigLine><Caret /></BigLine>
                                </Big>
                                <Big $w={80}>
                                    <BigIcon>
                                        <S w={38} h={37}>
                                            <circle cx="22" cy="14" r="13" fill="#fff" stroke="#4a7ebb" strokeWidth="3" />
                                            <path d="M12 24L3 33" stroke="#3f78b5" strokeWidth="4.500" strokeLinecap="round" />
                                        </S>
                                    </BigIcon>
                                    <BigLine>查找和选择</BigLine>
                                    <BigLine><Caret /></BigLine>
                                </Big>
                            </Body>
                        </Body>
                        <SmallGroupLabel label="编辑" />
                    </Group>

                    <Collapse>
                        <S w={12} h={8}><path d="M1 7l5-5 5 5" fill="none" stroke="#666" strokeWidth="1.800" /></S>
                    </Collapse>
                </Ribbon>

                <FormulaBar>
                    <WhiteBox $w={127}>
                        <NameValue>E42</NameValue>
                        <Caret style={{marginRight: 6}} />
                    </WhiteBox>
                    <Grip><i /><i /><i /></Grip>
                    <WhiteBox $w={135} style={{marginRight: 5}}>
                        <FxBtn>
                            <S w={16} h={16}><path d="M2 2l12 12M14 2L2 14" stroke="#c4c4c4" strokeWidth="2" /></S>
                        </FxBtn>
                        <FxBtn>
                            <S w={18} h={16}><path d="M1 8l5 6L17 2" fill="none" stroke="#c4c4c4" strokeWidth="2.200" /></S>
                        </FxBtn>
                        <FxBtn><FxText>fx</FxText></FxBtn>
                    </WhiteBox>
                    <WhiteBox style={{justifyContent: 'flex-end', paddingRight: 3}}>
                        <S w={12} h={8}><path d="M1 1.500l5 5 5-5" fill="none" stroke="#555" strokeWidth="1.800" /></S>
                    </WhiteBox>
                </FormulaBar>

                <SheetArea>
                    <Grid>
                        <GridRow>
                            <Corner>
                                <S w={26} h={24}><path d="M26 0v24H0z" fill="#b4b4b4" /></S>
                            </Corner>
                            {columns.map((c, i) => <ColHead key={c} $sel={i < 5}><span>{c}</span></ColHead>)}
                        </GridRow>
                        {rows.map(r => <SheetRow key={r.no} row={r} />)}
                        <Selection />
                    </Grid>
                    <VScroll>
                        <ScrollBtn><Arrow $dir="up" /></ScrollBtn>
                        <VThumb />
                        <ScrollBtn><Arrow $dir="down" /></ScrollBtn>
                    </VScroll>
                </SheetArea>

                <TabBar>
                    <NavArrows>
                        <Arrow $dir="left" $color="#c8c8c8" />
                        <Arrow $dir="right" $color="#c8c8c8" />
                    </NavArrows>
                    <SheetTab>Sheet1</SheetTab>
                    <AddSheet>
                        <S w={11} h={11}><path d="M5.500 0v11M0 5.500h11" stroke="#666" strokeWidth="1.400" /></S>
                    </AddSheet>
                    <HGrip><i /><i /><i /></HGrip>
                    <HScroll>
                        <ScrollBtn $w={19}><Arrow $dir="left" $color="#666" /></ScrollBtn>
                        <HThumb />
                        <ScrollBtn $w={18}><Arrow $dir="right" $color="#666" /></ScrollBtn>
                    </HScroll>
                </TabBar>

                <StatusBar>
                    <Stats>
                        <span>平均值: 20.5</span>
                        <span>计数: 197</span>
                        <span>求和: 820</span>
                    </Stats>
                    <ViewBtns>
                        <ViewBtn $on>
                            <S w={16} h={15}>
                                <rect x=".5" y=".5" width="15" height="14" fill="none" stroke="#777" />
                                <path d="M5.500 0v15M10.500 0v15M0 5h16M0 10h16" stroke="#777" />
                            </S>
                        </ViewBtn>
                        <ViewBtn>
                            <S w={16} h={16}>
                                <rect x=".5" y=".5" width="15" height="15" fill="none" stroke="#777" />
                                <path d="M4.500 3.500h7v9h-7zM6 6h4M6 8h4M6 10h4" fill="none" stroke="#888" />
                            </S>
                        </ViewBtn>
                        <ViewBtn>
                            <S w={16} h={16}>
                                <rect x=".5" y=".5" width="15" height="15" fill="none" stroke="#777" />
                                <path d="M5.500 0v8.500h5V0M0 8.500h5M10.500 8.500h5" fill="none" stroke="#777" />
                            </S>
                        </ViewBtn>
                    </ViewBtns>
                    <Zoomer>
                        <ZoomSign>−</ZoomSign>
                        <ZoomTrack><ZoomThumb /></ZoomTrack>
                        <ZoomSign>+</ZoomSign>
                    </Zoomer>
                    <ZoomValue>140%</ZoomValue>
                </StatusBar>
            </Win>
            <Edge />
        </Page>
    );
}
